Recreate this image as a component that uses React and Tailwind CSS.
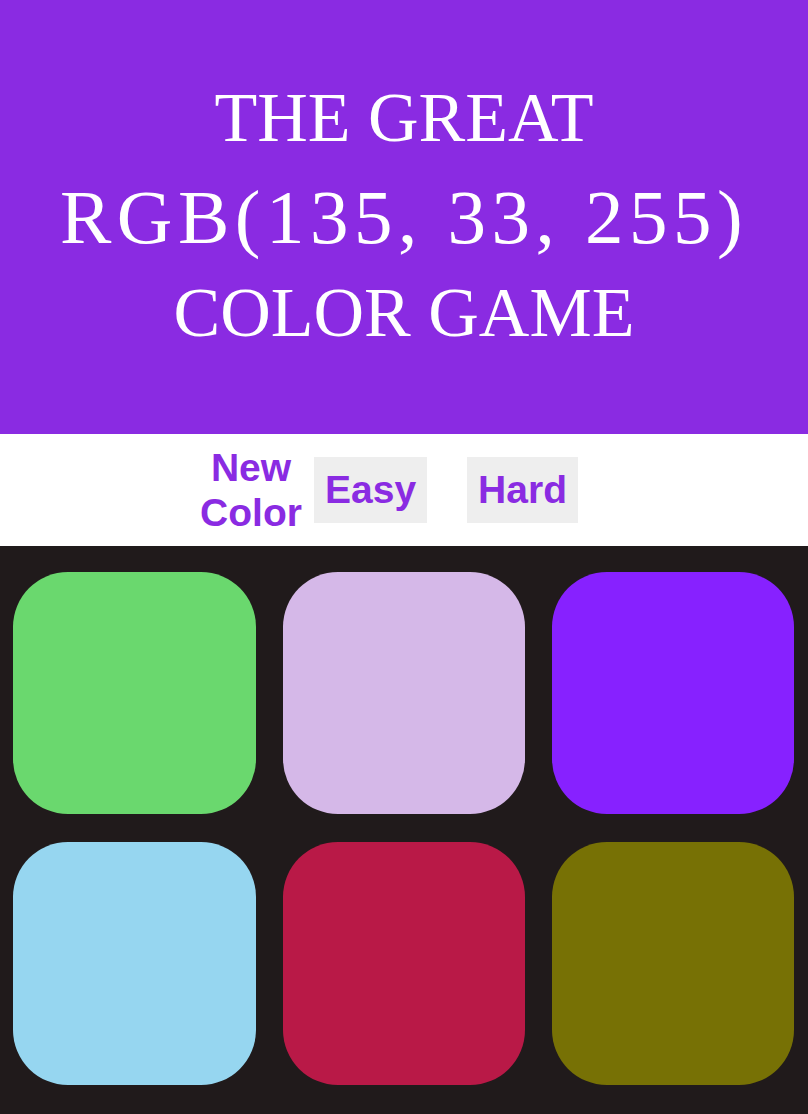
import React from "react";

const colors = ["#6ad86e", "#d5b8e8", "#8721ff", "#96d6f0", "#b91947", "#777105"];

const App = () => {
  return (
    <div className="w-full min-h-[1114px] bg-[#201a1b]">
      <header className="h-[434px] bg-[#8a2be2] text-white text-center font-['Liberation_Serif',serif] pt-[83px]">
        <div className="text-[70px] leading-[70px]">THE GREAT</div>
        <div className="text-[77px] leading-[86px] tracking-[5.5px] mt-[21px]">RGB(135, 33, 255)</div>
        <div className="text-[70px] leading-[70px] mt-[18px]">COLOR GAME</div>
      </header>

      <div className="h-[112px] bg-white flex items-center justify-center pr-[42px] font-['Liberation_Sans',sans-serif] font-bold text-[39px] text-[#8a2be2]">
        <button className="w-[126px] px-[11px] leading-[45px] text-center">New Color</button>
        <button className="h-[66px] px-[11px] bg-[#eeeeee]">Easy</button>
        <button className="h-[66px] px-[11px] bg-[#eeeeee] ml-[40px]">Hard</button>
      </div>

      <div className="flex flex-wrap pt-[26px]">
        {colors.map((c) => (
          <div
            key={c}
            className="w-[30%] aspect-square mx-[1.66%] mb-[28px] rounded-[55px]"
            style={{ backgroundColor: c }}
          />
        ))}
      </div>
    </div>
  );
};

export default App;
